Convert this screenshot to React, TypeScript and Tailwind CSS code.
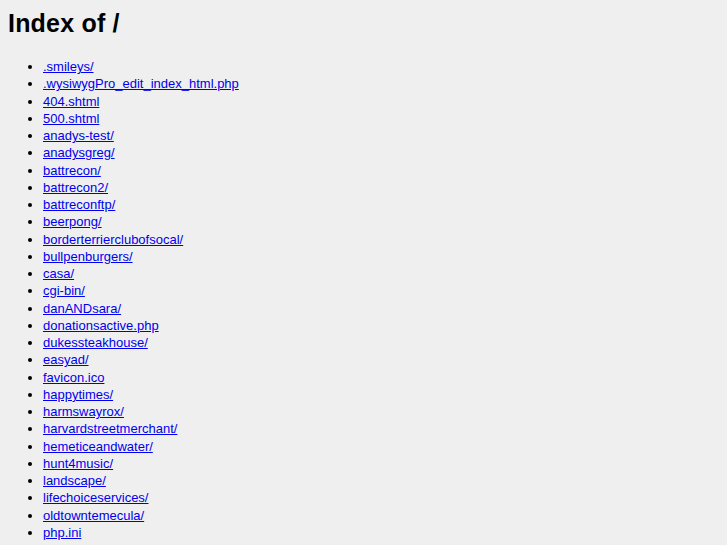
const entries = [
  ".smileys/",
  ".wysiwygPro_edit_index_html.php",
  "404.shtml",
  "500.shtml",
  "anadys-test/",
  "anadysgreg/",
  "battrecon/",
  "battrecon2/",
  "battreconftp/",
  "beerpong/",
  "borderterrierclubofsocal/",
  "bullpenburgers/",
  "casa/",
  "cgi-bin/",
  "danANDsara/",
  "donationsactive.php",
  "dukessteakhouse/",
  "easyad/",
  "favicon.ico",
  "happytimes/",
  "harmswayrox/",
  "harvardstreetmerchant/",
  "hemeticeandwater/",
  "hunt4music/",
  "landscape/",
  "lifechoiceservices/",
  "oldtowntemecula/",
  "php.ini",
];

export default function App() {
  return (
    <div className="min-h-screen bg-[#efefef] px-2 pt-[7px] font-['Liberation_Sans',Arial,sans-serif] text-black">
      <h1 className="text-[25px] font-bold leading-[32px] tracking-[0.2px]">Index of /</h1>
      <ul className="mt-[19px] list-disc pl-[35px] text-[13px] leading-[17.25px]">
        {entries.map((name) => (
          <li key={name}>
            <a href="#" className="text-[#0000ee] underline">
              {name}
            </a>
          </li>
        ))}
      </ul>
    </div>
  );
}
